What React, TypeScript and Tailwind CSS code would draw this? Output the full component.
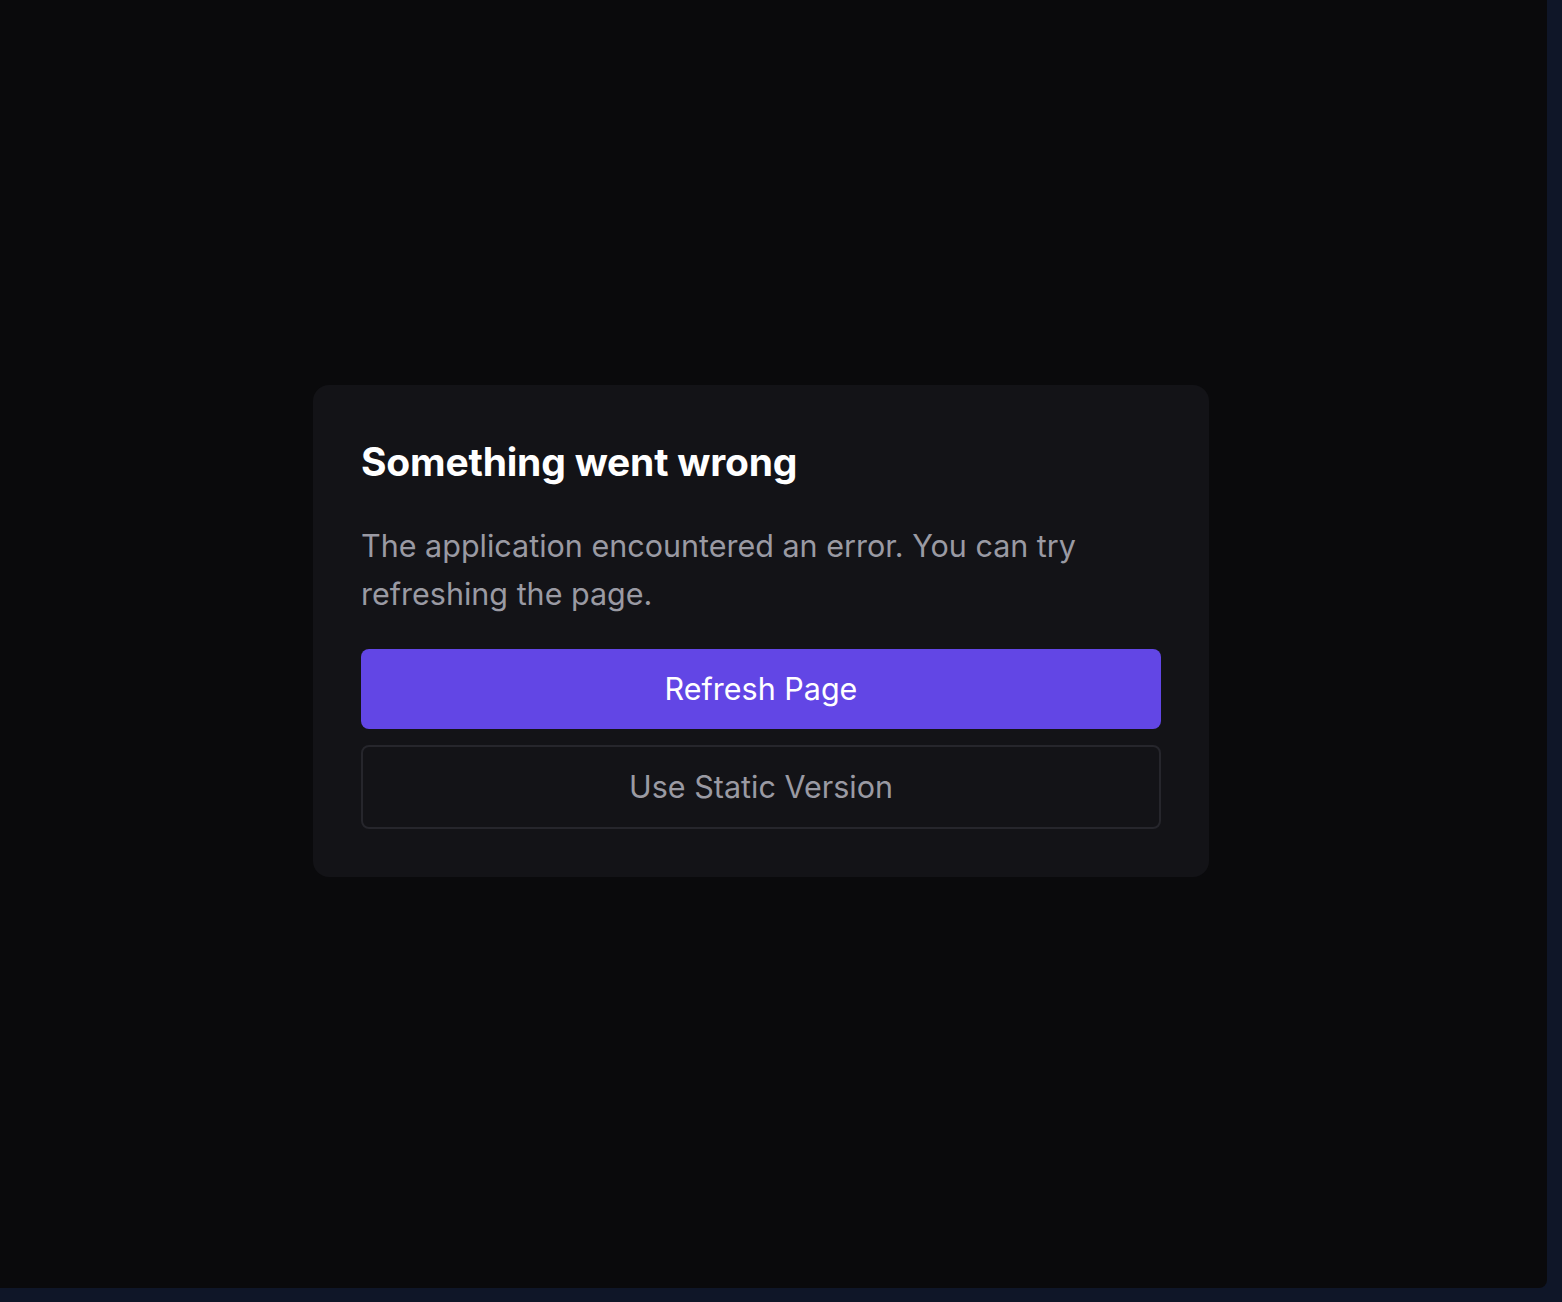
import React from 'react';

const font = { fontFamily: 'Inter, "Noto Sans", sans-serif' };

export default function App() {
    return (
        <div className="w-[1562px] h-[1302px] bg-[#0f1628] overflow-hidden" style={font}>
            <div className="w-[1547px] h-[1288px] bg-[#0a0a0c] rounded-br-lg flex items-center justify-center pr-[25px] pb-[26px]">
                <div className="w-[896px] bg-[#131317] rounded-2xl p-12 flex flex-col">
                    <h1 className="text-[39px] leading-[56px] font-bold text-white tracking-[-0.2px] pt-px">
                        Something went wrong
                    </h1>
                    <p className="mt-[32px] text-[30.5px] leading-[48px] text-[#9a9aa3]">
                        The application encountered an error. You can try refreshing the page.
                    </p>
                    <button className="mt-[31px] h-20 w-full rounded-lg bg-[#6246e5] text-white text-[30.5px]">
                        Refresh Page
                    </button>
                    <button className="mt-4 h-[84px] w-full rounded-lg border-2 border-[#26262c] text-[#9a9aa3] text-[30.5px]">
                        Use Static Version
                    </button>
                </div>
            </div>
        </div>
    );
}
